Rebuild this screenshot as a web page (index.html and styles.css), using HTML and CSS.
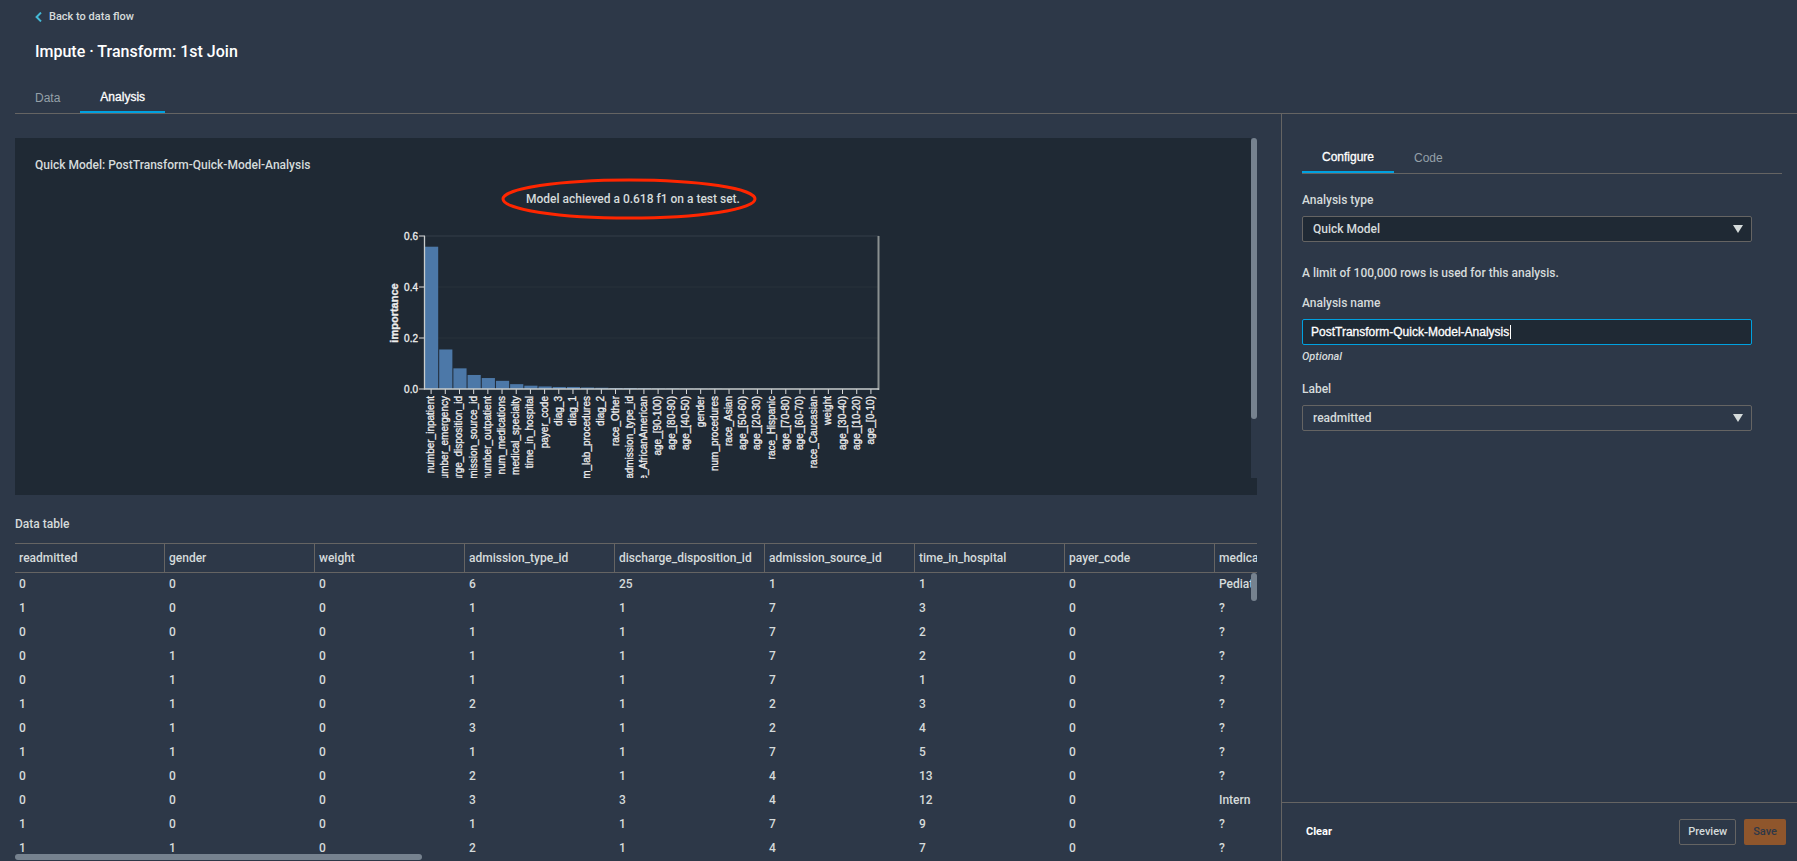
FILE: index.html
```html
<!DOCTYPE html>
<html lang="en">
<head>
<meta charset="utf-8">
<title>Impute · Transform: 1st Join</title>
<link rel="stylesheet" href="styles.css">
</head>
<body>
<div class="app">
  <header class="header">
    <a class="back" href="#">
      <svg class="back-icon" width="7" height="10" viewBox="0 0 7 10"><path d="M6 .6L1.6 5 6 9.4" fill="none" stroke="#44b9d6" stroke-width="2"/></svg>
      <span>Back to data flow</span>
    </a>
    <h1 class="title">Impute · Transform: 1st Join</h1>
  </header>
  <nav class="tabs page-tabs">
    <button class="tab" type="button">Data</button>
    <button class="tab active" type="button">Analysis</button>
  </nav>
  <div class="body">
    <main class="main">
      <section class="panel">
        <div class="panel-scroll">
          <h2 class="panel-title">Quick Model: PostTransform-Quick-Model-Analysis</h2>
          <p class="result">
            <span class="result-text">Model achieved a 0.618 f1 on a test set.
              <svg class="ring" viewBox="0 0 256 42"><ellipse cx="128" cy="21" rx="126" ry="19" fill="none" stroke="#ff2600" stroke-width="3"/></svg>
            </span>
          </p>
          <svg class="chart" id="chart" width="494" height="248" viewBox="0 0 494 248"></svg>
          <div class="track"><div class="thumb"></div></div>
        </div>
      </section>
      <h2 class="table-title">Data table</h2>
      <div class="table-wrap">
        <table class="table">
          <thead><tr id="head"></tr></thead>
          <tbody id="rows"></tbody>
        </table>
        <div class="track table-track"><div class="thumb"></div></div>
        <div class="hthumb"></div>
      </div>
    </main>
    <aside class="side">
      <div class="side-content">
        <nav class="tabs side-tabs">
          <button class="tab active" type="button">Configure</button>
          <button class="tab" type="button">Code</button>
        </nav>
        <form class="form">
          <label class="label" for="type">Analysis type</label>
          <div class="control">
            <select class="select filled" id="type"><option>Quick Model</option></select>
            <svg class="arrow" width="10" height="8" viewBox="0 0 10 8"><path d="M0 0h10L5 8z" fill="#d5dbdb"/></svg>
          </div>
          <p class="note">A limit of 100,000 rows is used for this analysis.</p>
          <label class="label" for="name">Analysis name</label>
          <div class="control">
            <input class="input" id="name" type="text" value="PostTransform-Quick-Model-Analysis">
            <span class="caret"></span>
          </div>
          <p class="hint">Optional</p>
          <label class="label" for="target">Label</label>
          <div class="control">
            <select class="select" id="target"><option>readmitted</option></select>
            <svg class="arrow" width="10" height="8" viewBox="0 0 10 8"><path d="M0 0h10L5 8z" fill="#d5dbdb"/></svg>
          </div>
        </form>
      </div>
      <footer class="footer">
        <button class="btn link" type="button">Clear</button>
        <button class="btn outline" type="button">Preview</button>
        <button class="btn primary" type="button" disabled>Save</button>
      </footer>
    </aside>
  </div>
</div>
<script src="app.js"></script>
</body>
</html>
```
FILE: styles.css
```css
* { box-sizing: border-box; }

body {
  margin: 0;
  background: #2d3848;
  color: #d5dbdb;
  font-family: Roboto, "Noto Sans", sans-serif;
  font-size: 12px;
  font-weight: 500;
  line-height: 16px;
}

h1, h2, p { margin: 0; }

button, select, input { font: inherit; color: inherit; }

.app {
  display: flex;
  flex-direction: column;
  height: 100vh;
  overflow: hidden;
}

.header { padding: 9px 35px 0; }

.back {
  display: flex;
  align-items: center;
  gap: 7px;
  width: fit-content;
  color: inherit;
  text-decoration: none;
  font-size: 11px;
}

.title {
  margin-top: 16px;
  color: #fff;
  font-size: 16px;
  font-weight: 500;
  line-height: 22px;
}

.tabs {
  display: flex;
  border-bottom: 1px solid #656463;
}

.page-tabs {
  margin: 19px 0 0 15px;
  height: 32px;
}

.tab {
  padding: 0 20px;
  border: 0;
  background: none;
  color: #95a0a8;
  font-family: "Liberation Sans", Arial, sans-serif;
  font-size: 12px;
  font-weight: 400;
}

.tab.active {
  color: #fff;
  border-bottom: 2px solid #00a1e0;
  -webkit-text-stroke: 0.3px #fff;
}

.body {
  display: grid;
  grid-template-columns: minmax(0, 1fr) 516px;
  grid-template-rows: minmax(0, 1fr);
  flex: 1;
  min-height: 0;
}

.main {
  display: flex;
  flex-direction: column;
  min-width: 0;
  min-height: 0;
  padding: 24px 24px 0 15px;
}

.panel {
  flex: none;
  padding-bottom: 17px;
  background: #1f2934;
}

.panel-scroll {
  position: relative;
  height: 340px;
  padding: 19px 26px 0 20px;
  overflow: hidden;
}

.panel-title, .table-title {
  font-size: 12px;
  font-weight: 500;
}

.result {
  margin: 18px 0 23px;
  text-align: center;
}

.result-text { position: relative; }

.ring {
  position: absolute;
  top: -14px;
  left: -25px;
  width: 256px;
  height: 42px;
}

.chart {
  display: block;
  margin: 0 auto;
  overflow: hidden;
  font-family: "Liberation Sans", Arial, sans-serif;
  font-size: 10px;
}

.track {
  position: absolute;
  top: 0;
  right: 0;
  bottom: 0;
  width: 6px;
  background: #2d3848;
}

.thumb {
  height: 281px;
  border-radius: 3px;
  background: #76828f;
}

.table-title { margin: 21px 0 11px; }

.table-wrap {
  position: relative;
  flex: 1;
  min-height: 0;
  overflow: hidden;
}

.table {
  width: 1350px;
  table-layout: fixed;
  border-collapse: separate;
  border-spacing: 0;
}

.table th, .table td {
  height: 24px;
  padding: 0 4px 2px;
  text-align: left;
  font-weight: 500;
  white-space: nowrap;
}

.table th {
  height: 30px;
  padding-bottom: 0;
  border-top: 1px solid #656463;
  border-bottom: 1px solid #656463;
  border-right: 1px solid #656463;
}

.table-track { top: 30px; }
.table-track .thumb { height: 28px; }

.hthumb {
  position: absolute;
  left: 0;
  bottom: 1px;
  width: 407px;
  height: 6px;
  border-radius: 3px;
  background: #76828f;
}

.side {
  display: flex;
  flex-direction: column;
  border-left: 1px solid #656463;
}

.side-content {
  flex: 1;
  padding: 28px 15px 0 20px;
}

.side-tabs { height: 32px; }

.form { padding: 18px 30px 0 0; }

.label { display: block; }

.control {
  position: relative;
  margin-top: 8px;
}

.select, .input {
  display: block;
  width: 100%;
  height: 26px;
  padding: 0 10px;
  border: 1px solid #656463;
  border-radius: 2px;
  appearance: none;
  background: transparent;
  outline: 0;
}

.select.filled { background: #1f2934; }

.input {
  padding: 0 8px;
  border-color: #00a1e0;
  background: #1f2934;
  color: #fff;
  font-family: "Liberation Sans", Arial, sans-serif;
  -webkit-text-stroke: 0.3px #fff;
}

.arrow {
  position: absolute;
  top: 9px;
  right: 9px;
  pointer-events: none;
}

.caret {
  position: absolute;
  top: 6px;
  left: 208px;
  width: 1px;
  height: 14px;
  background: #fff;
}

.note { margin: 23px 0 14px; }

.hint {
  margin: 4px 0 16px;
  font-size: 11px;
  font-style: italic;
}

.footer {
  display: flex;
  align-items: center;
  gap: 8px;
  height: 59px;
  padding: 0 11px 0 15px;
  border-top: 1px solid #656463;
}

.btn {
  height: 26px;
  padding: 0 8px;
  border: 1px solid transparent;
  border-radius: 2px;
  background: none;
  font-size: 11px;
}

.btn.link { margin-right: auto; color: #fff; font-weight: 700; }
.btn.outline { border-color: #656463; }
.btn.primary { background: #8f562c; color: #2e3848; }
```
FILE: app.js
```js
const features = [
  ["number_inpatient", 0.558], ["number_emergency", 0.155], ["discharge_disposition_id", 0.081],
  ["admission_source_id", 0.055], ["number_outpatient", 0.043], ["num_medications", 0.032],
  ["medical_specialty", 0.019], ["time_in_hospital", 0.013], ["payer_code", 0.01],
  ["diag_3", 0.008], ["diag_1", 0.008], ["num_lab_procedures", 0.006], ["diag_2", 0.005],
  ["race_Other", 0.004], ["admission_type_id", 0.004], ["race_AfricanAmerican", 0.003],
  ["age_[90-100)", 0.002], ["age_[80-90)", 0.002], ["age_[40-50)", 0.001], ["gender", 0.001],
  ["num_procedures", 0.001], ["race_Asian", 0], ["age_[50-60)", 0], ["age_[20-30)", 0],
  ["race_Hispanic", 0], ["age_[70-80)", 0], ["age_[60-70)", 0], ["race_Caucasian", 0],
  ["weight", 0], ["age_[30-40)", 0], ["age_[10-20)", 0], ["age_[0-10)", 0]
];

const left = 39, right = 493, base = 159, scale = 255;
const step = (right - left) / features.length;
const ink = 'fill="#eee" stroke="#eee" stroke-width="0.3"';
let svg = "";
for (const v of [0.2, 0.4, 0.6]) {
  svg += `<path d="M${left} ${base - v * scale}H${right}" stroke="${v === 0.6 ? "#343e49" : "#29323b"}"/>`;
}
features.forEach(([name, value], i) => {
  const x = left + i * step, mid = x + step / 2 - 1, h = value * scale;
  svg += `<rect x="${x}" y="${base - h}" width="${step - 1}" height="${h}" fill="#4c78a8"/>`;
  svg += `<path d="M${mid} ${base}v5" stroke="#ddd"/>`;
  svg += `<text transform="translate(${mid + 3} 166) rotate(-90)" text-anchor="end" ${ink}>${name}</text>`;
});
for (const v of [0, 0.2, 0.4, 0.6]) {
  const y = base - v * scale;
  svg += `<path d="M33 ${y}h6" stroke="#ddd"/><text x="32" y="${y + 3.5}" text-anchor="end" ${ink}>${v.toFixed(1)}</text>`;
}
svg += `<path d="M${right - 0.5} 6V${base + 1}" stroke="#8a9090" stroke-width="2"/>`;
svg += `<path d="M${left - 0.5} 6V${base}H${right}" fill="none" stroke="#c8cccc" stroke-width="1.3"/>`;
svg += `<text transform="translate(12 83) rotate(-90)" text-anchor="middle" ${ink} font-size="11" font-weight="700">importance</text>`;
document.getElementById("chart").innerHTML = svg;

const columns = ["readmitted", "gender", "weight", "admission_type_id", "discharge_disposition_id",
  "admission_source_id", "time_in_hospital", "payer_code", "medical_specialty"];
const rows = [
  [0, 0, 0, 6, 25, 1, 1, 0, "Pediatrics-Endocrinology"],
  [1, 0, 0, 1, 1, 7, 3, 0, "?"],
  [0, 0, 0, 1, 1, 7, 2, 0, "?"],
  [0, 1, 0, 1, 1, 7, 2, 0, "?"],
  [0, 1, 0, 1, 1, 7, 1, 0, "?"],
  [1, 1, 0, 2, 1, 2, 3, 0, "?"],
  [0, 1, 0, 3, 1, 2, 4, 0, "?"],
  [1, 1, 0, 1, 1, 7, 5, 0, "?"],
  [0, 0, 0, 2, 1, 4, 13, 0, "?"],
  [0, 0, 0, 3, 3, 4, 12, 0, "InternalMedicine"],
  [1, 0, 0, 1, 1, 7, 9, 0, "?"],
  [1, 1, 0, 2, 1, 4, 7, 0, "?"]
];
document.getElementById("head").innerHTML = columns.map(c => `<th>${c}</th>`).join("");
document.getElementById("rows").innerHTML =
  rows.map(r => `<tr>${r.map(v => `<td>${v}</td>`).join("")}</tr>`).join("");
```
